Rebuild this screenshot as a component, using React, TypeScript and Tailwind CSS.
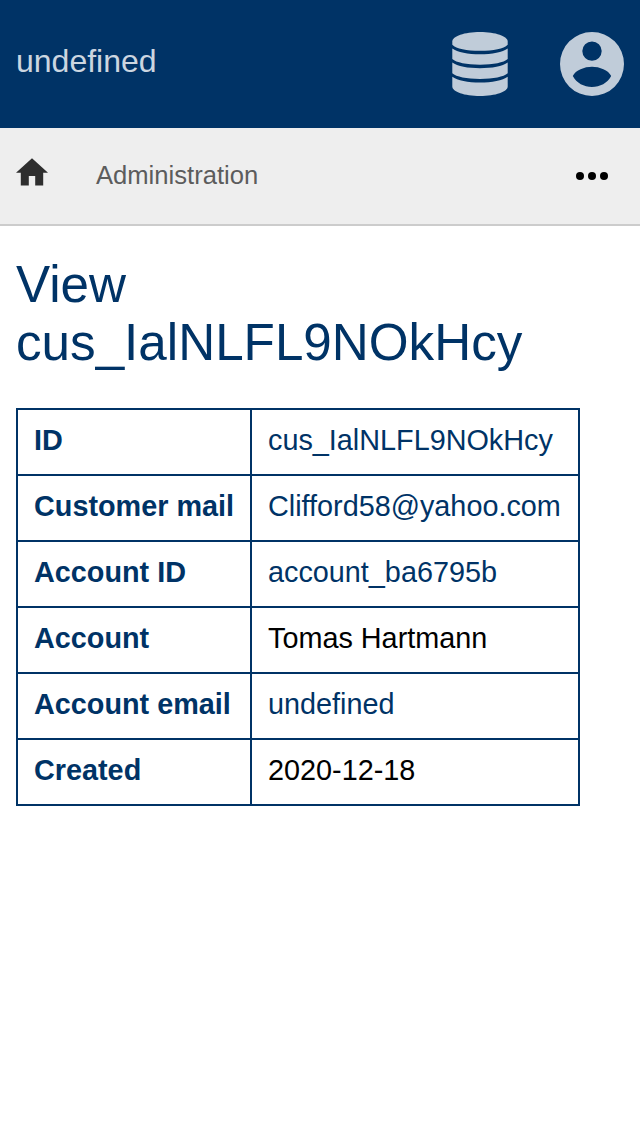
const rows = [
  { label: "ID", value: "cus_IalNLFL9NOkHcy", link: true },
  { label: "Customer mail", value: "Clifford58@yahoo.com", link: true },
  { label: "Account ID", value: "account_ba6795b", link: true },
  { label: "Account", value: "Tomas Hartmann", link: false },
  { label: "Account email", value: "undefined", link: true },
  { label: "Created", value: "2020-12-18", link: false },
];

function DatabaseIcon() {
  return (
    <svg viewBox="0 0 56 64" className="h-16 w-14 fill-current" aria-hidden="true">
      <path d="M.3 9.500C.3 4.200 12.500 0 28 0s27.700 4.200 27.700 9.500v3.200c-4 4-14.200 6.100-27.700 6.100S4.300 16.700.3 12.700Z" />
      <path d="M.3 16.400c5 3.800 15.700 5.900 27.700 5.900s22.700-2.100 27.700-5.900v10.700c-4 3.600-14.200 5.600-27.700 5.600S4.300 30.700.3 27.100Z" />
      <path d="M.3 30.600c5 3.800 15.700 5.700 27.700 5.700s22.700-1.900 27.700-5.700v10.700c-4 3.600-14.200 5.600-27.700 5.600S4.300 44.900.3 41.300Z" />
      <path d="M.3 44.800c5 3.800 15.700 5.800 27.700 5.800s22.700-2 27.700-5.800v9.700c0 5.300-12.200 9.500-27.700 9.500S.3 59.800.3 54.500Z" />
    </svg>
  );
}

function AccountIcon() {
  return (
    <svg viewBox="0 0 64 64" className="size-16 fill-current" aria-hidden="true">
      <path
        fillRule="evenodd"
        d="M32 0a32 32 0 1 1 0 64 32 32 0 0 1 0-64Zm0 9.400a9.700 9.700 0 1 0 0 19.400 9.700 9.700 0 0 0 0-19.400Zm0 25.400c-7.500 0-16.500 3.400-19.200 9.200C16.500 51 24 55 32 55s15.500-4 19.200-11C48.500 38.200 39.500 34.800 32 34.800Z"
      />
    </svg>
  );
}

function HomeIcon() {
  return (
    <svg viewBox="0 0 32 28" className="mb-2 h-7 w-8 fill-[#2e2e2e]" aria-hidden="true">
      <path d="M12.800 27.500v-9.600h6.400v9.600h8V14.700H32L16 .3 0 14.700h4.800v12.800Z" />
    </svg>
  );
}

function MoreIcon() {
  return (
    <svg viewBox="0 0 32 8" className="mr-4 ml-auto h-2 w-8 fill-black" aria-hidden="true">
      <circle cx="4" cy="4" r="4" />
      <circle cx="16" cy="4" r="4" />
      <circle cx="28" cy="4" r="4" />
    </svg>
  );
}

export default function App() {
  return (
    <div className="min-h-screen bg-white font-['Liberation_Sans',Arial,sans-serif] text-black">
      <header className="flex h-32 items-center justify-between bg-[#003366] px-4 text-[#c0ccd9]">
        <a className="pb-1.5 text-[32px] leading-9 text-[#ccd6e0]">undefined</a>
        <div className="flex items-center gap-[52px]">
          <DatabaseIcon />
          <AccountIcon />
        </div>
      </header>
      <nav className="flex h-[98px] items-center border-b-2 border-[#cccccc] bg-[#eeeeee] px-4">
        <HomeIcon />
        <a className="mb-0.5 ml-12 text-[25.6px] leading-8 text-[#5c5c5c]">Administration</a>
        <MoreIcon />
      </nav>
      <main className="px-4 pt-[30px]">
        <h1 className="text-[51.2px] leading-[58px] text-[#003366]">
          View
          <br />
          cus_IalNLFL9NOkHcy
        </h1>
        <table className="mt-9 w-[564px] table-fixed border-collapse text-[28.8px] leading-8">
          <tbody>
            {rows.map((row) => (
              <tr key={row.label} className="h-[66px]">
                <th className="w-[234px] border-2 border-[#003366] px-4 pt-0 pb-1 text-left font-bold whitespace-nowrap text-[#003366]">
                  {row.label}
                </th>
                <td className="border-2 border-[#003366] px-4 pt-0 pb-1 whitespace-nowrap">
                  <span className={row.link ? "text-[#003366]" : "text-black"}>{row.value}</span>
                </td>
              </tr>
            ))}
          </tbody>
        </table>
      </main>
    </div>
  );
}
